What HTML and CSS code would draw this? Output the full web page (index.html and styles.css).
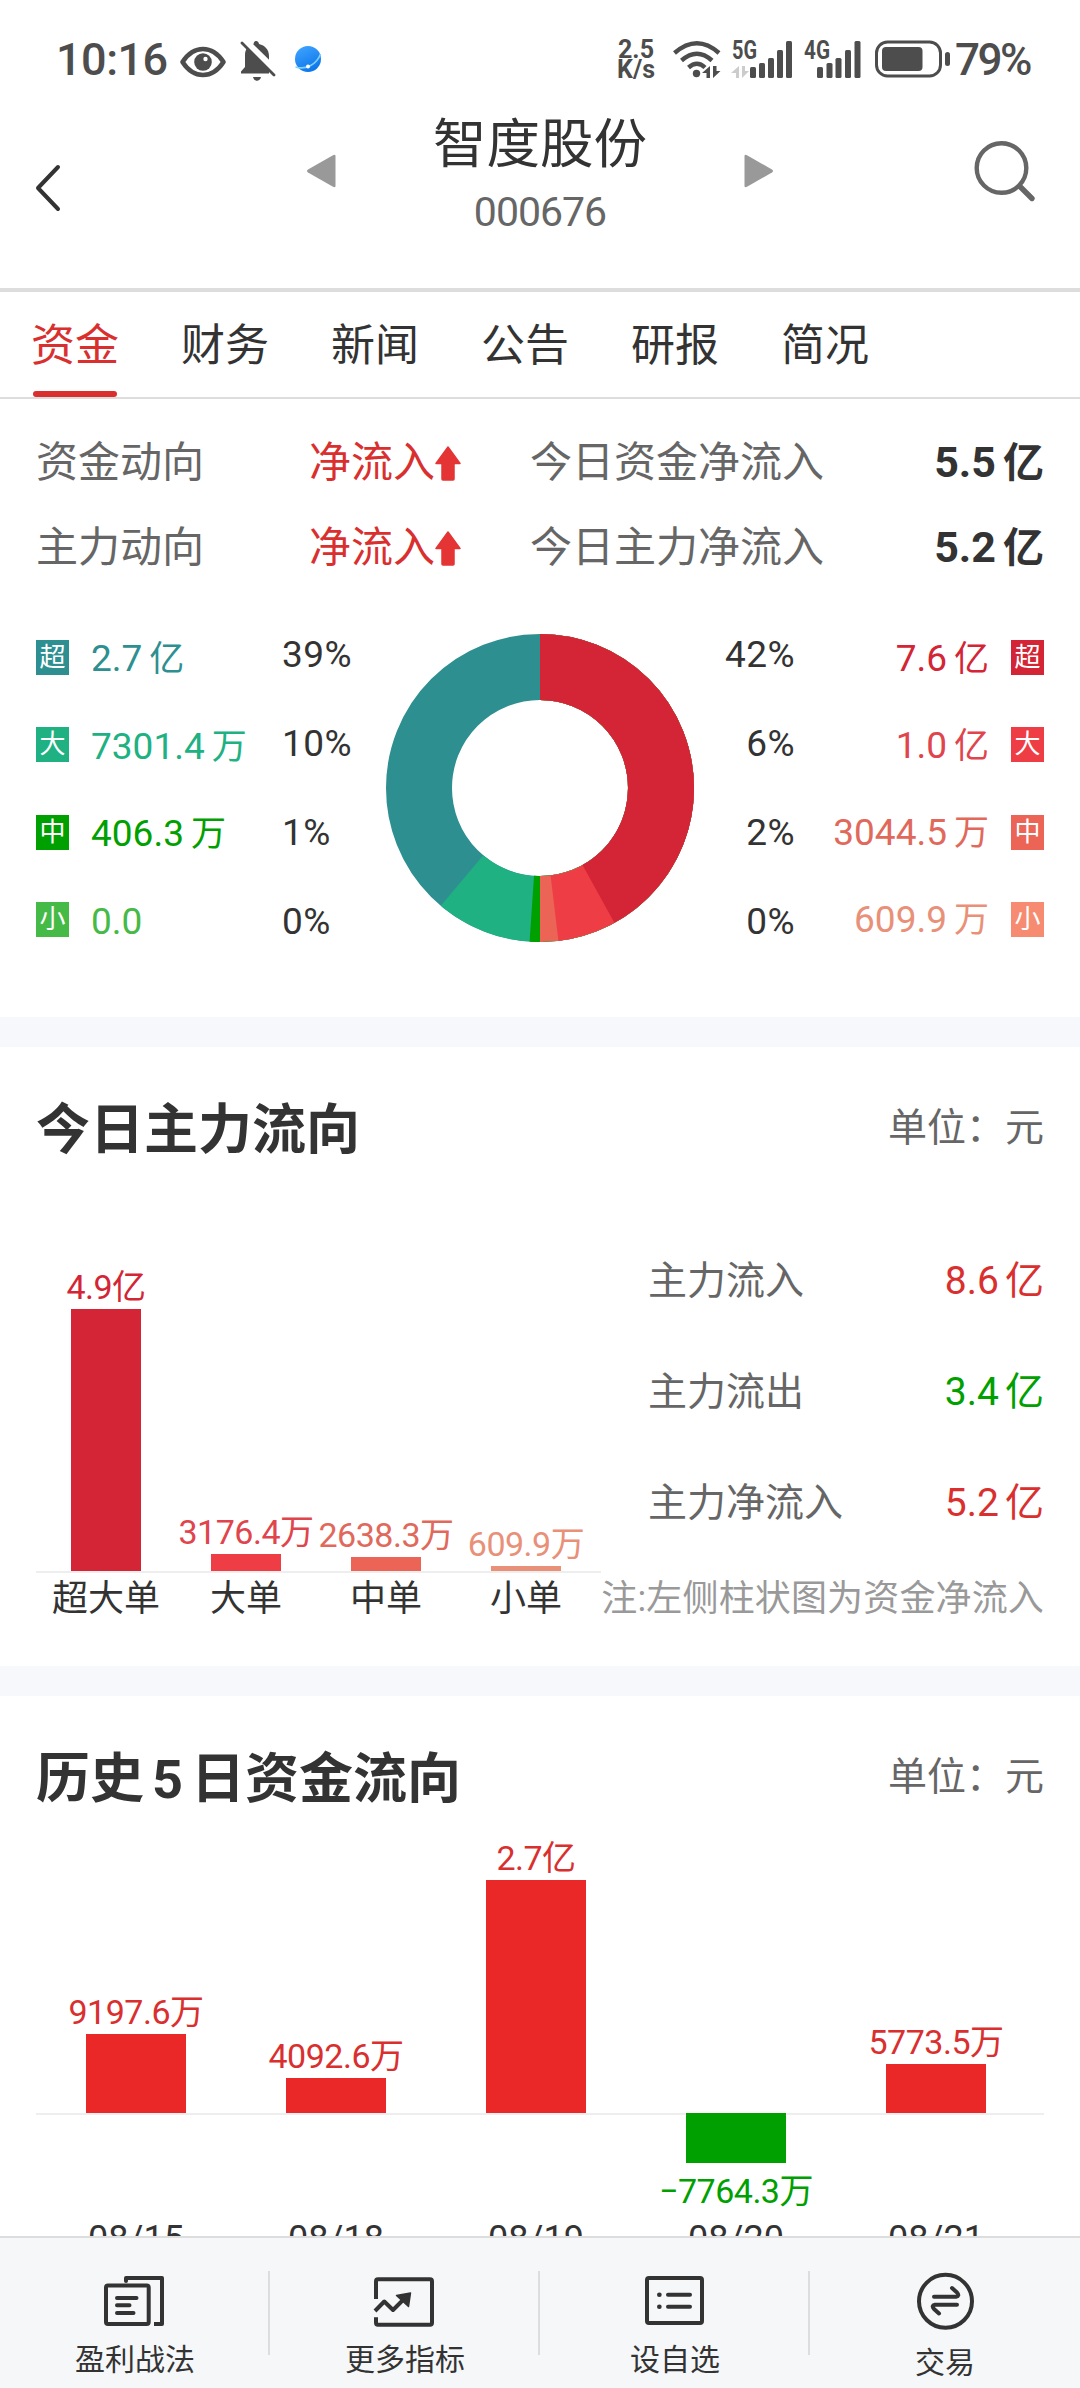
FILE: index.html
```html
<!DOCTYPE html>
<html lang="zh-CN">
<head>
<meta charset="utf-8">
<title>智度股份 000676</title>
<link rel="stylesheet" href="styles.css">
</head>
<body>
<div class="app">
  <div class="status">
    <div class="status-left">
      <span class="clock">10:16</span>
      <svg class="eye" width="46" height="32" viewBox="0 0 46 32"><path d="M2.500 16C9 6 16 3 23 3s14 3 20.500 13C37 26 30 29 23 29S9 26 2.500 16Z" fill="none" stroke="#4d4d4d" stroke-width="4.600" stroke-linejoin="round"/><circle cx="23" cy="16" r="8.800" fill="#4d4d4d"/><circle cx="25.500" cy="13" r="2.200" fill="#fff"/></svg>
      <svg class="bell" width="36" height="42" viewBox="0 0 36 42"><path d="M1 33.500v-2l4-4.500V15C5 9 8.500 5.500 13.500 4c.5-4 5-4 5.500 0 6 1.500 10 5.500 10 12v17.500ZM13 37h8c-1 5-7 5-8 0Z" fill="#4d4d4d"/><path d="M4 0 37 32.500" stroke="#fff" stroke-width="7"/><path d="M0-3V22L5 10Z" fill="#fff"/><path d="M2 3 34 35" stroke="#4d4d4d" stroke-width="2.800" stroke-linecap="round"/></svg>
      <svg class="ball" width="28" height="28" viewBox="0 0 28 28"><defs><linearGradient id="g" x1="0.2" y1="0" x2="0.7" y2="1"><stop offset="0" stop-color="#3ea3ff"/><stop offset="1" stop-color="#0b74e8"/></linearGradient></defs><circle cx="14" cy="14" r="13" fill="url(#g)"/><path d="M1.500 22c10 3 21-2 25-13" fill="none" stroke="#7fd0ff" stroke-width="1.600"/><circle cx="14" cy="21.500" r="2" fill="#fff"/></svg>
    </div>
    <div class="status-right">
      <div class="speed"><span>2.5</span><span>K/s</span></div>
      <svg class="wifi" width="48" height="38" viewBox="0 0 48 38"><g fill="none" stroke="#4d4d4d" stroke-width="4.400"><path d="M1.500 12Q24-7.500 46 12"/><path d="M8.500 19.500Q24 6 39 19.500"/><path d="M15.500 26.500Q24 19 32 26.500"/></g><circle cx="23.500" cy="32.500" r="3.700" fill="#4d4d4d"/><path d="M37 25v12h-3.500v-5h-4.500ZM40 25v12l7.500-7h-4v-5Z" fill="#4d4d4d"/></svg>
      <svg class="sig5" width="64" height="40" viewBox="0 0 64 40"><text class="net" x="1" y="19" textLength="25" lengthAdjust="spacingAndGlyphs">5G</text><path d="M8 26v12H5v-5H0ZM11 26v12l7-7h-4v-5Z" fill="#ccc"/><g fill="#4d4d4d"><rect x="19" y="27" width="6" height="11" rx="1.500"/><rect x="28" y="23" width="6" height="15" rx="1.500"/><rect x="37" y="18" width="6" height="20" rx="1.500"/><rect x="46" y="10" width="6" height="28" rx="1.500"/><rect x="55" y="1" width="6" height="37" rx="1.500"/></g></svg>
      <svg class="sig4" width="58" height="40" viewBox="0 0 58 40"><text class="net" x="0" y="19" textLength="26" lengthAdjust="spacingAndGlyphs">4G</text><g fill="#4d4d4d"><rect x="13" y="27" width="6" height="11" rx="1.500"/><rect x="22.500" y="23" width="6" height="15" rx="1.500"/><rect x="31.500" y="18" width="6" height="20" rx="1.500"/><rect x="41" y="10" width="6" height="28" rx="1.500"/><rect x="50.500" y="1" width="6" height="37" rx="1.500"/></g></svg>
      <svg class="batt" width="76" height="38" viewBox="0 0 76 38"><rect x="1.500" y="2" width="64" height="34" rx="11" fill="none" stroke="#4d4d4d" stroke-width="3"/><rect x="7" y="7" width="40.500" height="24" rx="4" fill="#4d4d4d"/><rect x="70" y="12" width="5" height="14" rx="2.500" fill="#4d4d4d"/></svg>
      <span class="pct79">79%</span>
    </div>
  </div>

  <div class="header">
    <svg class="back" width="28" height="50" viewBox="0 0 28 50"><path d="M24 4 4 25 24 46" fill="none" stroke="#333" stroke-width="4" stroke-linecap="round" stroke-linejoin="round"/></svg>
    <div class="switcher">
      <svg class="tri" width="30" height="34" viewBox="0 0 30 34"><path d="M2 15.500 27 1.200Q29.500 0 29.500 2v30q0 2-2.500 .8L2 18.500q-2-1.500 0-3Z" fill="#999"/></svg>
      <div class="name"><div class="stock">智度股份</div><div class="code">000676</div></div>
      <svg class="tri" width="30" height="34" viewBox="0 0 30 34"><path d="M28 15.500 3 1.200Q.5 0 .5 2v30q0 2 2.500 .8L28 18.500q2-1.500 0-3Z" fill="#999"/></svg>
    </div>
    <svg class="search" width="62" height="62" viewBox="0 0 62 62"><circle cx="27.500" cy="28" r="24.800" fill="none" stroke="#666" stroke-width="4.400"/><path d="m46 46.500 12 12" stroke="#666" stroke-width="5.400" stroke-linecap="round"/></svg>
  </div>

  <nav class="tabs">
    <span class="tab on">资金</span><span class="tab">财务</span><span class="tab">新闻</span><span class="tab">公告</span><span class="tab">研报</span><span class="tab">简况</span>
  </nav>

  <section class="summary">
    <div class="trend">
      <span class="t-label">资金动向</span><span class="t-dir">净流入<svg width="28" height="36" viewBox="0 0 28 36"><path d="M14 2 26 18.500H20V34q0 1-1 1H9q-1 0-1-1V18.500H2Z" fill="#e53434" stroke="#e53434" stroke-width="1.500" stroke-linejoin="round"/></svg></span><span class="t-label">今日资金净流入</span><span class="t-val">5.5<i>亿</i></span>
    </div>
    <div class="trend">
      <span class="t-label">主力动向</span><span class="t-dir">净流入<svg width="28" height="36" viewBox="0 0 28 36"><path d="M14 2 26 18.500H20V34q0 1-1 1H9q-1 0-1-1V18.500H2Z" fill="#e53434" stroke="#e53434" stroke-width="1.500" stroke-linejoin="round"/></svg></span><span class="t-label">今日主力净流入</span><span class="t-val">5.2<i>亿</i></span>
    </div>
    <div class="breakdown">
      <div class="col tags"><b class="tag g1">超</b><b class="tag g2">大</b><b class="tag g3">中</b><b class="tag g4">小</b></div>
      <div class="col vals"><span class="c-g1">2.7<i>亿</i></span><span class="c-g2">7301.4<i>万</i></span><span class="c-g3">406.3<i>万</i></span><span class="c-g4">0.0</span></div>
      <div class="col pcts"><span>39%</span><span>10%</span><span>1%</span><span>0%</span></div>
      <svg class="donut" width="308" height="308" viewBox="0 0 308 308">
        <g fill="none" stroke-width="66" transform="rotate(-90 154 154)">
          <circle cx="154" cy="154" r="121" stroke="#2e8f91"/>
          <circle cx="154" cy="154" r="121" stroke="#20b183" pathLength="360" stroke-dasharray="220.100 360"/>
          <circle cx="154" cy="154" r="121" stroke="#00a000" pathLength="360" stroke-dasharray="183.900 360"/>
          <circle cx="154" cy="154" r="121" stroke="#ec6456" pathLength="360" stroke-dasharray="180 360"/>
          <circle cx="154" cy="154" r="121" stroke="#ef3d46" pathLength="360" stroke-dasharray="173.100 360"/>
          <circle cx="154" cy="154" r="121" stroke="#d32535" pathLength="360" stroke-dasharray="151.100 360"/>
        </g>
      </svg>
      <div class="col pcts end"><span>42%</span><span>6%</span><span>2%</span><span>0%</span></div>
      <div class="col vals end"><span class="c-r1">7.6<i>亿</i></span><span class="c-r2">1.0<i>亿</i></span><span class="c-r3">3044.5<i>万</i></span><span class="c-r4">609.9<i>万</i></span></div>
      <div class="col tags right"><b class="tag r1">超</b><b class="tag r2">大</b><b class="tag r3">中</b><b class="tag r4">小</b></div>
    </div>
  </section>

  <section class="today">
    <div class="sec-head"><h2>今日主力流向</h2><span>单位：元</span></div>
    <div class="today-body">
      <div class="chart">
        <div class="bars">
          <div class="bar-col c-r1"><span class="bar-val">4.9亿</span><div class="bar r1" style="height:262px"></div></div>
          <div class="bar-col c-r2"><span class="bar-val">3176.4万</span><div class="bar r2" style="height:17px"></div></div>
          <div class="bar-col c-r3"><span class="bar-val">2638.3万</span><div class="bar r3" style="height:14px"></div></div>
          <div class="bar-col c-r4"><span class="bar-val">609.9万</span><div class="bar r5" style="height:5px"></div></div>
        </div>
        <div class="cats"><span>超大单</span><span>大单</span><span>中单</span><span>小单</span></div>
      </div>
      <div class="flows">
        <div class="flow"><span>主力流入</span><em class="up">8.6<i>亿</i></em></div>
        <div class="flow"><span>主力流出</span><em class="down">3.4<i>亿</i></em></div>
        <div class="flow"><span>主力净流入</span><em class="up">5.2<i>亿</i></em></div>
        <div class="note">注:左侧柱状图为资金净流入</div>
      </div>
    </div>
  </section>

  <section class="history">
    <div class="sec-head"><h2>历史<i>5</i>日资金流向</h2><span>单位：元</span></div>
    <div class="hist">
      <div class="day up"><div class="above"><span class="bar-val">9197.6万</span><div class="hbar" style="height:79px"></div></div><div class="below"></div><span class="date">08/15</span></div>
      <div class="day up"><div class="above"><span class="bar-val">4092.6万</span><div class="hbar" style="height:35px"></div></div><div class="below"></div><span class="date">08/18</span></div>
      <div class="day up"><div class="above"><span class="bar-val">2.7亿</span><div class="hbar" style="height:233px"></div></div><div class="below"></div><span class="date">08/19</span></div>
      <div class="day down"><div class="above"></div><div class="below"><div class="hbar" style="height:50px"></div><span class="bar-val">−7764.3万</span></div><span class="date">08/20</span></div>
      <div class="day up"><div class="above"><span class="bar-val">5773.5万</span><div class="hbar" style="height:49px"></div></div><div class="below"></div><span class="date">08/21</span></div>
    </div>
  </section>

  <footer class="dock">
    <div class="item"><svg width="62" height="58" viewBox="0 0 62 58"><g fill="none" stroke="#333" stroke-width="4" stroke-linecap="round" stroke-linejoin="round"><rect x="2" y="13.500" width="42.700" height="38.500" rx="2"/><path d="M22 9V6H58V52"/><path d="M58 52H50" stroke-linecap="butt"/><path d="M13 26H32.500M13 33.300H25.500M13 41H29.500"/></g></svg><span>盈利战法</span></div>
    <div class="item"><svg width="62" height="58" viewBox="0 0 62 58"><g fill="none" stroke="#333" stroke-width="4" stroke-linejoin="round"><path d="M2 27V9.300q0-2 2-2H56q2 0 2 2V50.700q0 2-2 2H4q-2 0-2-2V45.300"/><path d="M1 39 10.300 29.500 19 38 31 26"/></g><path d="m22.500 23.500 14-2.500-2 13.500Z" fill="#333" stroke="#333" stroke-width="1.500" stroke-linejoin="round"/></svg><span>更多指标</span></div>
    <div class="item"><svg width="62" height="58" viewBox="0 0 62 58"><g fill="none" stroke="#333" stroke-width="4" stroke-linecap="round"><rect x="3" y="6" width="55" height="45" rx="2"/><path d="M24 22.700H46M24 34.700H46"/><path d="M15.300 22.700h.1M15.300 34.700h.1" stroke-width="4.600"/></g></svg><span>设自选</span></div>
    <div class="item"><svg width="62" height="58" viewBox="0 0 62 58"><g fill="none" stroke="#333" stroke-width="4" stroke-linecap="round" stroke-linejoin="round"><circle cx="31.500" cy="29.300" r="26.500"/><path d="M20 24.700H42Q46 24 43 20.500L38 16M43 32.700H21Q17 33.500 20 37L25 41.500"/></g></svg><span class="low">交易</span></div>
  </footer>
</div>
</body>
</html>
```

FILE: styles.css
```css
* { box-sizing: border-box; }
body { margin: 0; background: #fff; }
i, em { font-style: normal; }
svg { display: block; flex: none; overflow: visible; }
.app {
  width: 1080px; height: 2388px; overflow: hidden;
  display: flex; flex-direction: column;
  font-family: Roboto, "Noto Sans CJK SC", sans-serif;
  color: #333; background: #fff; white-space: nowrap;
}

/* status bar */
.status { height: 108px; padding: 0 49px 0 56px; display: flex; justify-content: space-between; color: #4d4d4d; }
.status-left, .status-right { display: flex; }
.clock { width: 124px; margin-top: 30px; font-size: 45px; line-height: 60px; font-weight: 500; letter-spacing: -.5px; }
.eye { margin-top: 46px; }
.bell { margin: 40px 0 0 14px; overflow: hidden; }
.ball { margin: 45px 0 0 18px; }
.speed { width: 40px; margin-top: 36px; display: flex; flex-direction: column; gap: 2px; font-size: 25px; line-height: 28px; font-weight: 700; text-align: center; }
.speed span { height: 18px; }
.wifi { margin: 41px 0 0 17px; }
.sig5 { margin: 40px 0 0 10px; }
.sig4 { margin: 40px 0 0 9px; }
.batt { margin: 40px 0 0 13px; }
.net { font-size: 25px; font-weight: 700; fill: #4d4d4d; }
.pct79 { width: 76px; margin: 30px 0 0 4px; font-size: 44px; line-height: 60px; font-weight: 500; letter-spacing: -2.500px; }

/* header */
.header { height: 184px; padding: 0 44px 0 34px; display: flex; justify-content: space-between; border-bottom: 4px solid #ddd; }
.back { margin-top: 55px; }
.switcher { width: 468px; margin-left: 44px; display: flex; justify-content: space-between; }
.tri { margin-top: 46px; }
.name { text-align: center; }
.stock { margin-top: 2px; font-size: 53.500px; line-height: 70px; }
.code { margin-top: 6px; font-size: 41px; line-height: 52px; letter-spacing: -1px; color: #666; }
.search { margin-top: 32px; }

/* tabs */
.tabs { height: 107px; padding-left: 31px; display: flex; gap: 62px; border-bottom: 2px solid #ddd; }
.tab { width: 88px; height: 105px; padding-top: 22px; font-size: 44px; line-height: 64px; display: flex; flex-direction: column; }
.tab.on { color: #d9302f; }
.tab.on::after { content: ""; width: 84px; height: 6px; margin: 13px 0 0 2px; border-radius: 3px; background: #d9302f; }

/* summary */
.summary { height: 648px; padding: 21px 36px 0; border-bottom: 30px solid #f6f8fb; }
.trend { height: 85px; display: grid; grid-template-columns: 273px 221px 300px 1fr; align-items: center; font-size: 42px; line-height: 60px; }
.t-label { color: #666; }
.t-dir { display: flex; align-items: center; color: #d9302f; }
.t-dir svg { margin-left: -1px; }
.t-val { font-size: 43px; font-weight: 700; text-align: right; }
.t-val i { margin-left: 7px; font-size: 41px; }
.breakdown { display: flex; align-items: flex-start; margin-top: 44px; }
.col { display: flex; flex-direction: column; }
.col.end { text-align: right; }
.tags { width: 33px; gap: 52.400px; margin-top: 6px; }
.tags.right { margin-left: 22px; }
.tag { height: 35px; color: #fff; font-size: 26px; line-height: 34px; font-weight: 400; text-align: center; }
.vals { width: 192px; padding-left: 22px; font-size: 37px; line-height: 50px; gap: 37.500px; }
.vals i { margin-left: 7px; font-size: 35px; line-height: 40px; }
.vals.end { width: 194px; padding: 0; gap: 37px; }
.pcts { width: 125px; margin-top: -4px; padding-left: 21px; font-size: 37px; line-height: 50px; letter-spacing: .4px; gap: 39px; }
.pcts.end { width: 101px; padding: 0; }
.g1 { background: #2e8f91; } .c-g1 { color: #2e8f91; }
.g2 { background: #20b183; } .c-g2 { color: #20b183; }
.g3 { background: #00a000; } .c-g3 { color: #00a000; }
.g4 { background: #46ba46; } .c-g4 { color: #46ba46; }
.r1 { background: #d32535; } .c-r1 { color: #d32535; }
.r2 { background: #ef3d46; } .c-r2 { color: #e0444c; }
.r3 { background: #ec6456; } .c-r3 { color: #e0695c; }
.r4 { background: #f78b72; } .c-r4 { color: #e99079; }
.r5 { background: #e99079; }
.up { color: #d9302f; }
.down { color: #00a000; }

/* section headings */
.sec-head { display: flex; justify-content: space-between; align-items: flex-start; height: 80px; line-height: 80px; }
.sec-head h2 { margin: 3px 0 0; font-size: 54px; line-height: 80px; font-weight: 700; }
.sec-head h2 i { margin: 0 8px; }
.sec-head span { font-size: 39px; color: #666; }

/* today's flow */
.today { height: 649px; padding: 41px 36px 0; border-bottom: 30px solid #f6f8fb; }
.today-body { display: flex; margin-top: 72px; }
.chart { width: 565px; }
.bars { height: 333px; display: flex; border-bottom: 2px solid #eee; }
.bar-col { width: 140px; display: flex; flex-direction: column; align-items: center; justify-content: flex-end; }
.bar-val { height: 42px; font-size: 34px; line-height: 40px; letter-spacing: -.5px; }
.bar { width: 70px; flex: none; }
.cats { display: flex; padding-top: 1px; font-size: 36px; line-height: 50px; }
.cats span { width: 140px; text-align: center; }
.flows { width: 443px; padding-top: 1px; display: flex; flex-direction: column; }
.flow { height: 111px; padding-left: 47px; display: flex; justify-content: space-between; font-size: 39px; line-height: 80px; }
.flow span { color: #666; }
.flow i { margin-left: 6px; }
.note { font-size: 36px; line-height: 50px; letter-spacing: .15px; text-align: right; color: #999; }

/* five-day history */
.history { flex: 1; min-height: 0; overflow: hidden; padding: 41px 36px 0; }
.hist { display: flex; background: linear-gradient(#eee, #eee) 0 296px / 100% 2px no-repeat; }
.day { width: 200px; display: flex; flex-direction: column; align-items: center; }
.above { height: 296px; display: flex; flex-direction: column; align-items: center; justify-content: flex-end; }
.below { height: 106px; display: flex; flex-direction: column; align-items: center; }
.hbar { width: 100px; flex: none; background: #00a000; }
.up .hbar { background: #ea2828; }
.below .bar-val { margin-top: 8px; }
.date { font-size: 36px; line-height: 40px; color: #333; }

/* dock */
.dock { height: 152px; flex: none; display: flex; background: #f6f7f9; border-top: 2px solid #ddd; }
.item { width: 270px; padding-top: 34px; display: flex; flex-direction: column; align-items: center; background: linear-gradient(#ddd, #ddd) 100% 33px / 2px 84px no-repeat; }
.item:last-child { background: none; }
.item span { margin-top: 10px; font-size: 30px; line-height: 40px; }
.item .low { margin-top: 13px; }
```
